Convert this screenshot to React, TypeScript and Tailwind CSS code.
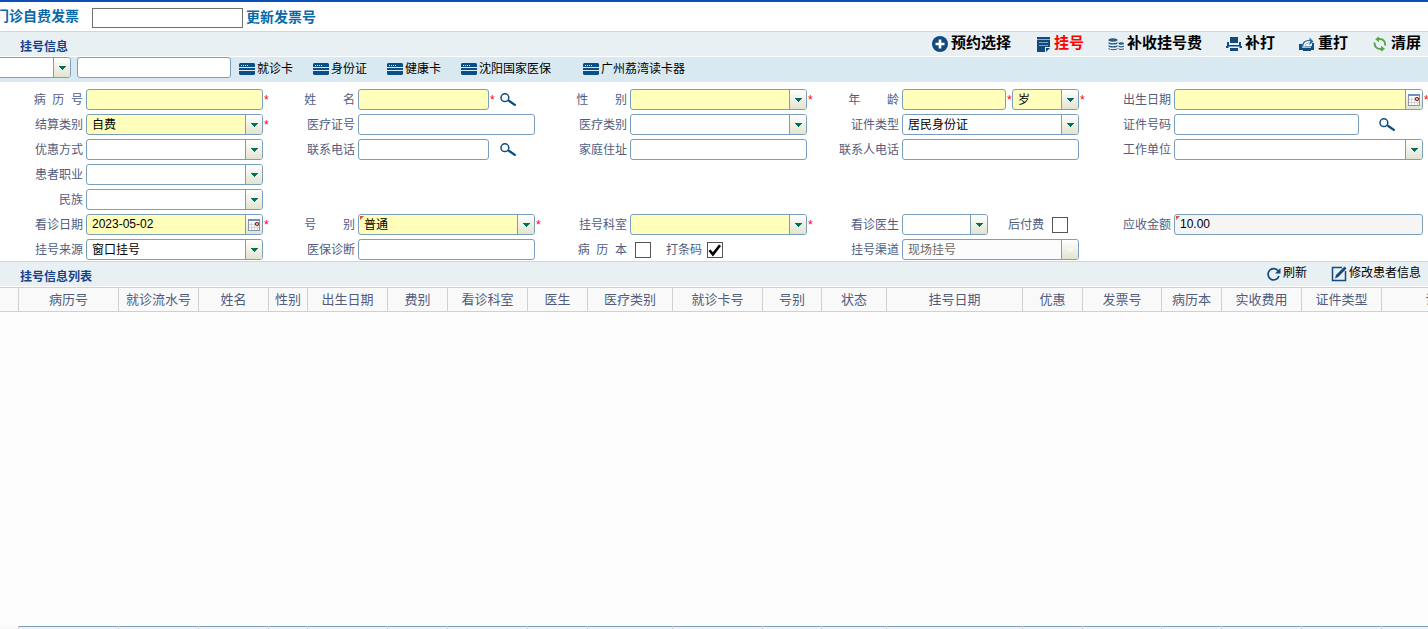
import { useId, type ReactNode } from "react";

const control =
  "block w-full h-[21px] appearance-none rounded-[3px] border border-[#7b9ebd] pl-[5px] text-xs outline-none";

function tone(kind?: string) {
  if (kind === "required") return "bg-[#ffffbb] text-black";
  if (kind === "readonly") return "bg-[#f5f5f5] text-black";
  if (kind === "disabled") return "bg-[#fcfcfc] text-[#6b6b6b] opacity-100";
  return "bg-white text-black";
}

function Corner() {
  return (
    <svg className="pointer-events-none absolute left-[2px] top-[2px]" width="4" height="4" viewBox="0 0 4 4">
      <path d="M0 0h4L0 4z" fill="#d8523f" />
    </svg>
  );
}

function Trigger({ children }: { children: ReactNode }) {
  return (
    <span className="pointer-events-none absolute inset-y-px right-px flex w-[17px] items-center justify-center rounded-r-[2px] border-l border-[#7b9ebd] bg-linear-to-b from-white to-[#e2e3d0]">
      {children}
    </span>
  );
}

function Arrow({ color = "#00705c" }: { color?: string }) {
  return (
    <svg width="7" height="4" viewBox="0 0 7 4" className="mt-px" shapeRendering="crispEdges">
      <path d="M0 0h7v1H6v1H5v1H4v1H3V3H2V2H1V1H0z" fill={color} />
    </svg>
  );
}

function Calendar() {
  return (
    <svg width="12" height="12" viewBox="0 0 12 12">
      <rect x=".5" y=".5" width="11" height="11" fill="#fff" stroke="#8794b4" />
      <path d="M0 0h12v2H0z" fill="#6f8fc2" />
      <path d="M3.500 3v8M6.500 3v8M9.500 7v4M1 5.500h6M1 8.500h10" stroke="#d3d3d3" />
      <circle cx="9" cy="5" r="1.500" fill="#fff" stroke="#7a0c0c" strokeWidth="1.200" />
    </svg>
  );
}

type ControlProps = { id?: string; value?: string; kind?: string; mark?: boolean; width?: string; label?: string };

function Text({ id, value, kind, mark, width = "w-[177px]", label }: ControlProps) {
  return (
    <span className={`relative block shrink-0 ${width}`}>
      <input id={id} aria-label={label} defaultValue={value} readOnly={kind === "readonly"} className={`${control} pb-px ${tone(kind)}`} />
      {mark && <Corner />}
    </span>
  );
}

function Combo({ id, value = "", kind, mark, width = "w-[177px]", label }: ControlProps) {
  return (
    <span className={`relative block shrink-0 ${width}`}>
      <select id={id} aria-label={label} disabled={kind === "disabled"} className={`${control} pt-px leading-[18px] ${tone(kind)}`}>
        <option>{value}</option>
      </select>
      {mark && <Corner />}
      <Trigger>
        <Arrow color={kind === "disabled" ? "#f8f8f2" : undefined} />
      </Trigger>
    </span>
  );
}

function DateBox({ id, value, kind, width = "w-[177px]" }: ControlProps) {
  return (
    <span className={`relative block shrink-0 ${width}`}>
      <input id={id} defaultValue={value} className={`${control} pb-px ${tone(kind)}`} />
      <Trigger>
        <Calendar />
      </Trigger>
    </span>
  );
}

function Check({ id, checked }: { id: string; checked?: boolean }) {
  return (
    <span className="relative block size-4 shrink-0">
      <input
        id={id}
        type="checkbox"
        defaultChecked={checked}
        className="peer block size-4 appearance-none border border-[#555] bg-white"
      />
      <svg
        className="pointer-events-none absolute inset-0 hidden peer-checked:block"
        width="16"
        height="16"
        viewBox="0 0 16 16"
      >
        <path d="M2.500 8.200l3.400 4.200L13 3.200" fill="none" stroke="#000" strokeWidth="2.600" />
      </svg>
    </span>
  );
}

function Star() {
  return <span className="w-[5px] shrink-0 pl-px pt-[2px] text-xs leading-[19px] text-[#ff0000]">*</span>;
}

function SearchButton({ label, className }: { label: string; className: string }) {
  return (
    <button type="button" aria-label={label} className={`shrink-0 ${className}`}>
      <svg width="16" height="13" viewBox="0 0 16 13">
        <circle cx="4.900" cy="4.700" r="3.900" fill="none" stroke="#0b4d80" strokeWidth="1.500" />
        <path d="M7.800 7.200l2 1.200" stroke="#0b4d80" strokeWidth="1.400" />
        <path d="M9.600 8.200l5.200 3.700" stroke="#0b4d80" strokeWidth="2.300" strokeLinecap="round" />
      </svg>
    </button>
  );
}

function Field({ label, children }: { label: string; children: (id: string) => ReactNode }) {
  const id = useId();
  return (
    <div className="flex min-w-0 items-center">
      <label htmlFor={id} className="mr-[3px] w-[83px] shrink-0 whitespace-pre text-right text-xs text-[#515c7f]">
        {label}
      </label>
      {children(id)}
    </div>
  );
}

function Row({ children }: { children: ReactNode }) {
  return <div className="grid h-[21px] grid-cols-[repeat(4,272px)_minmax(200px,1fr)]">{children}</div>;
}

const grow = "min-w-0 flex-1";

function PatientForm() {
  return (
    <form className="flex flex-col gap-1 bg-white pb-px pt-[7px]">
      <Row>
        <Field label="病  历  号">{(id) => <><Text id={id} kind="required" /><Star /></>}</Field>
        <Field label="姓        名">
          {(id) => <><Text id={id} kind="required" width="w-[131px]" /><Star /><SearchButton label="查找姓名" className="ml-[6px]" /></>}
        </Field>
        <Field label="性        别">{(id) => <><Combo id={id} kind="required" /><Star /></>}</Field>
        <Field label="年        龄">
          {(id) => (
            <>
              <Text id={id} kind="required" width="w-[104px]" />
              <Star />
              <span className="w-px shrink-0" />
              <Combo label="年龄单位" value="岁" kind="required" width="w-[67px]" />
              <Star />
            </>
          )}
        </Field>
        <Field label="出生日期">{(id) => <><DateBox id={id} kind="required" width={grow} /><Star /></>}</Field>
      </Row>
      <Row>
        <Field label="结算类别">{(id) => <><Combo id={id} value="自费" kind="required" /><Star /></>}</Field>
        <Field label="医疗证号">{(id) => <Text id={id} />}</Field>
        <Field label="医疗类别">{(id) => <Combo id={id} />}</Field>
        <Field label="证件类型">{(id) => <Combo id={id} value="居民身份证" />}</Field>
        <Field label="证件号码">
          {(id) => <><Text id={id} width={grow} /><SearchButton label="查找证件" className="ml-5 mr-[33px]" /></>}
        </Field>
      </Row>
      <Row>
        <Field label="优惠方式">{(id) => <Combo id={id} />}</Field>
        <Field label="联系电话">
          {(id) => <><Text id={id} width="w-[131px]" /><SearchButton label="查找电话" className="ml-[11px]" /></>}
        </Field>
        <Field label="家庭住址">{(id) => <Text id={id} />}</Field>
        <Field label="联系人电话">{(id) => <Text id={id} />}</Field>
        <Field label="工作单位">{(id) => <><Combo id={id} width={grow} /><span className="w-[5px]" /></>}</Field>
      </Row>
      <Row>
        <Field label="患者职业">{(id) => <Combo id={id} />}</Field>
      </Row>
      <Row>
        <Field label="民族">{(id) => <Combo id={id} />}</Field>
      </Row>
      <Row>
        <Field label="看诊日期">{(id) => <><DateBox id={id} value="2023-05-02" kind="required" /><Star /></>}</Field>
        <Field label="号        别">{(id) => <><Combo id={id} value="普通" kind="required" mark /><Star /></>}</Field>
        <Field label="挂号科室">{(id) => <><Combo id={id} kind="required" /><Star /></>}</Field>
        <Field label="看诊医生">
          {(id) => (
            <>
              <Combo id={id} width="w-[86px]" />
              <label htmlFor="pay-later" className="ml-5 mr-2 shrink-0 text-xs text-[#515c7f]">后付费</label>
              <Check id="pay-later" />
            </>
          )}
        </Field>
        <Field label="应收金额">
          {(id) => <><Text id={id} value="10.00" kind="readonly" mark width={grow} /><span className="w-[5px]" /></>}
        </Field>
      </Row>
      <Row>
        <Field label="挂号来源">{(id) => <Combo id={id} value="窗口挂号" />}</Field>
        <Field label="医保诊断">{(id) => <Text id={id} />}</Field>
        <Field label="病  历  本">
          {(id) => (
            <>
              <span className="w-[5px] shrink-0" />
              <Check id={id} />
              <label htmlFor="barcode" className="ml-[15px] mr-[5px] shrink-0 text-xs text-[#515c7f]">打条码</label>
              <Check id="barcode" checked />
            </>
          )}
        </Field>
        <Field label="挂号渠道">{(id) => <Combo id={id} value="现场挂号" kind="disabled" />}</Field>
      </Row>
    </form>
  );
}

function CardIcon() {
  return (
    <svg width="16" height="12" viewBox="0 0 16 12" className="mt-px shrink-0">
      <path d="M1 0h14l1 1v3H0V1z" fill="#0a4f85" />
      <path d="M0 5h16v2H0zM0 8h16v3l-1 1H1l-1-1z" fill="#0a4f85" />
      <path d="M2 2.500h7" stroke="#cfe2ee" strokeDasharray="1 1" />
    </svg>
  );
}

function CardButton({ label }: { label: string }) {
  return (
    <button type="button" className="flex shrink-0 items-center gap-[2px] text-xs text-black">
      <CardIcon />
      {label}
    </button>
  );
}

const navy = "#14497c";

const icons: Record<string, ReactNode> = {
  plus: (
    <>
      <circle cx="8" cy="8" r="8" fill={navy} />
      <path d="M8 3.500v9M3.500 8h9" stroke="#fff" strokeWidth="2.600" />
    </>
  ),
  note: (
    <>
      <path d="M2 1h13v10H10v5H2z" fill={navy} />
      <path d="M2 3.500h13" stroke="#8fb0ca" />
      <path d="M4 6.500h9M4 9.500h9" stroke="#7fa3c0" />
      <path d="M11 12h4l-4 4z" fill={navy} />
    </>
  ),
  coins: (
    <g fill="#2b5a86">
      <ellipse cx="5" cy="4" rx="4.500" ry="1.700" />
      <path d="M.5 6c2 1.600 7 1.600 9 0v1.400c-2 1.600-7 1.600-9 0zM.5 9c2 1.600 7 1.600 9 0v1.400c-2 1.600-7 1.600-9 0zM.5 12c2 1.600 7 1.600 9 0v1c-2 1.600-7 1.600-9 0z" />
      <ellipse cx="13.200" cy="7.500" rx="2.800" ry="1.200" />
      <path d="M10.500 9.500c1.500 1 4 1 5.500 0v1.200c-1.500 1-4 1-5.500 0zM10.500 12.200c1.500 1 4 1 5.500 0v1c-1.500 1-4 1-5.500 0z" />
    </g>
  ),
  print: (
    <>
      <path d="M4 1h8v6H4z" fill={navy} />
      <path d="M1 6h2v3h10V6h2v6H1z" fill="#0b5188" />
      <path d="M2 10.500h12v1.500H2z" fill="#e8f0f4" />
      <path d="M0 10h2.500v2H0zM13.500 10H16v2h-2.500zM4 12h8v3H4z" fill={navy} />
    </>
  ),
  reprint: (
    <>
      <path d="M0 8h3v2h10V7h2v7H0z" fill="#0b5188" />
      <path d="M10.500 1.500l4 4-4 3.500V7C8 7 6.500 7.600 6 10H3C3 6 6 4 10.500 4z" fill="#2c6d9e" />
      <path d="M5 10.500c.2-3 2-4.700 6-4.700" fill="none" stroke="#fff" strokeWidth="1.400" />
      <path d="M3 10.500h9v1.200H3z" fill="#e8f0f4" />
      <path d="M4 12h8v3H4z" fill={navy} />
    </>
  ),
  recycle: (
    <g fill="none" stroke="#5aa545" strokeWidth="2">
      <path d="M6 3.200C11.500 2.500 13.500 5.500 13.200 9.500M9.500 12.800C4.500 13.500 2.500 10.500 2.500 6.500" />
      <path d="M7 .2L3.200 3.200 7 6.200zM9 9.800l4 3-4 3z" fill="#5aa545" stroke="none" />
    </g>
  ),
  refresh: (
    <>
      <path d="M12.200 5A5.600 5.600 0 1 0 13 10" fill="none" stroke={navy} strokeWidth="1.700" />
      <path d="M14.500 2v5.500H9z" fill={navy} />
    </>
  ),
  edit: (
    <>
      <path d="M11 1.500H1.500v13h13V5" fill="none" stroke={navy} strokeWidth="1.500" />
      <path d="M4 12.500l1-3.500L13.500.5l2 2-8.300 8.500z" fill={navy} />
    </>
  ),
};

function Icon({ name }: { name: string }) {
  return (
    <svg width="16" height="16" viewBox="0 0 16 16" className="mt-[2px] shrink-0">
      {icons[name]}
    </svg>
  );
}

function SectionHeader({ title, children }: { title: string; children: ReactNode }) {
  return (
    <header className="flex h-[26px] items-center justify-between border-b border-t border-b-white border-t-[#d3d5d6] bg-[#e8f0f4] pl-5 pr-[7px]">
      <h2 className="pt-[5px] text-xs font-bold text-[#15428b]">{title}</h2>
      <div className="flex items-center gap-6 pb-[2px]">{children}</div>
    </header>
  );
}

const actions = [
  { label: "预约选择", icon: "plus", color: "text-black" },
  { label: "挂号", icon: "note", color: "text-[#ff0000]" },
  { label: "补收挂号费", icon: "coins", color: "text-black" },
  { label: "补打", icon: "print", color: "text-black" },
  { label: "重打", icon: "reprint", color: "text-black" },
  { label: "清屏", icon: "recycle", color: "text-black" },
];

const columns = [
  { title: "", width: "w-[19px]" },
  { title: "病历号", width: "w-[100px]" },
  { title: "就诊流水号", width: "w-[80px]" },
  { title: "姓名", width: "w-[70px]" },
  { title: "性别", width: "w-[39px]" },
  { title: "出生日期", width: "w-[80px]" },
  { title: "费别", width: "w-[60px]" },
  { title: "看诊科室", width: "w-[80px]" },
  { title: "医生", width: "w-[60px]" },
  { title: "医疗类别", width: "w-[85px]" },
  { title: "就诊卡号", width: "w-[90px]" },
  { title: "号别", width: "w-[59px]" },
  { title: "状态", width: "w-[65px]" },
  { title: "挂号日期", width: "w-[136px]" },
  { title: "优惠", width: "w-[60px]" },
  { title: "发票号", width: "w-[79px]" },
  { title: "病历本", width: "w-[60px]" },
  { title: "实收费用", width: "w-[80px]" },
  { title: "证件类型", width: "w-[80px]" },
  { title: "证件号码", width: "w-[140px]" },
];

export default function App() {
  return (
    <div className="flex min-h-screen flex-col overflow-hidden bg-white font-['Liberation_Sans','Noto_Sans_CJK_SC',sans-serif]">
      <div className="flex h-[31px] items-center overflow-hidden border-t-2 border-[#0a50b8]">
        <label htmlFor="invoice" className="-ml-[5px] mr-[13px] pb-[2px] text-sm font-bold text-[#0a6aa8]">
          门诊自费发票
        </label>
        <input id="invoice" className="mt-[3px] h-5 w-[151px] border border-[#707070] bg-white px-1 text-xs outline-none" />
        <a href="#invoice" className="ml-[3px] text-sm font-bold text-[#0a6aa8]">
          更新发票号
        </a>
      </div>

      <SectionHeader title="挂号信息">
        {actions.map((a) => (
          <button key={a.label} type="button" className={`flex items-center gap-[3px] text-[15px] font-bold leading-5 ${a.color}`}>
            <Icon name={a.icon} />
            {a.label}
          </button>
        ))}
      </SectionHeader>

      <div className="flex h-[25px] items-start overflow-hidden bg-[#d9e9f1]">
        <div className="-ml-2 mr-[6px] shrink-0">
          <Combo label="卡类型" width="w-[79px]" />
        </div>
        <Text label="卡号" width="w-[154px]" />
        <div className="ml-2 flex h-[23px] items-center gap-5">
          <CardButton label="就诊卡" />
          <CardButton label="身份证" />
          <CardButton label="健康卡" />
          <div className="flex items-center gap-8">
            <CardButton label="沈阳国家医保" />
            <CardButton label="广州荔湾读卡器" />
          </div>
        </div>
      </div>

      <PatientForm />

      <SectionHeader title="挂号信息列表">
        <button type="button" className="flex items-center gap-px text-xs text-black">
          <Icon name="refresh" />
          刷新
        </button>
        <button type="button" className="flex items-center gap-[2px] text-xs text-black">
          <Icon name="edit" />
          修改患者信息
        </button>
      </SectionHeader>

      <div className="flex flex-1 flex-col overflow-hidden bg-[#fdfdfd]">
        <table className="w-[1522px] table-fixed border-separate border-spacing-0">
          <thead>
            <tr>
              {columns.map((c) => (
                <th
                  key={c.title}
                  scope="col"
                  className={`${c.width} h-[25px] whitespace-nowrap border-y border-r border-[#d0d0d0] bg-[#f9f9f9] p-0 text-[13px] font-normal leading-[23px] text-[#515c7f]`}
                >
                  {c.title}
                </th>
              ))}
            </tr>
          </thead>
        </table>
        <div className="flex-1" />
        <div className="flex h-[3px] shrink-0">
          {columns.map((c, i) => (
            <div
              key={c.title}
              className={`${c.width} shrink-0 border-r border-[#d0d0d0] ${i === 0 ? "bg-[#f9f9f9]" : ""}`}
            >
              {i > 0 && <div className="h-[3px] border-t border-[#7b9ebd] bg-[#eef0fa]" />}
            </div>
          ))}
        </div>
      </div>
    </div>
  );
}
